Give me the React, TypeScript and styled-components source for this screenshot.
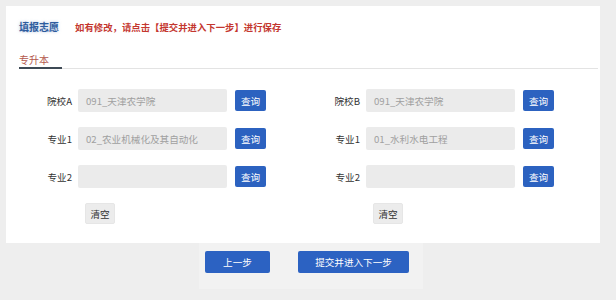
import React from "react";
import styled, { createGlobalStyle } from "styled-components";

const GlobalStyle = createGlobalStyle`
  html, body { margin: 0; padding: 0; }
  body {
    background: #eeeeee;
    font-family: "Noto Sans CJK SC", "Noto Sans", "Liberation Sans", sans-serif;
    color: #333;
  }
`;

const Page = styled.div`
  width: 616px;
  height: 300px;
  padding: 6px 0 0 6px;
  box-sizing: border-box;
  display: flex;
  flex-direction: column;
`;

const Panel = styled.div`
  width: 594px;
  height: 237px;
  box-sizing: border-box;
  background: #ffffff;
  padding: 15px 2px 0 13px;
  display: flex;
  flex-direction: column;
`;

const Header = styled.div`
  display: flex;
  align-items: center;
  gap: 16px;
  height: 12px;
`;

const Title = styled.span`
  font-size: 10px;
  line-height: 12px;
  font-weight: 700;
  color: #2e5c9e;
  text-shadow: 0 0 3px rgba(120, 150, 200, 0.6);
`;

const Notice = styled.span`
  font-size: 9.4px;
  line-height: 12px;
  font-weight: 700;
  color: #c4372f;
`;

const TabBar = styled.div`
  margin-top: 21px;
  display: flex;
  border-bottom: 1px solid #e3e3e3;
`;

const Tab = styled.div`
  width: 43px;
  font-size: 10px;
  line-height: 12px;
  color: #b4574c;
  padding-bottom: 1px;
  border-bottom: 2px solid #3e4a55;
  margin-bottom: -1px;
`;

const Form = styled.div`
  margin-top: 20px;
  margin-left: 1px;
  display: grid;
  grid-template-columns: 288px 288px;
`;

const Column = styled.div`
  display: flex;
  flex-direction: column;
  gap: 15px;
`;

const Row = styled.div`
  display: flex;
  align-items: center;
  height: 23px;
`;

const Label = styled.span`
  width: 52px;
  text-align: right;
  font-size: 9.6px;
  color: #333;
  margin-right: 6px;
`;

const Field = styled.div`
  width: 149px;
  height: 23px;
  box-sizing: border-box;
  background: #ebebeb;
  border-radius: 2px;
  padding-left: 8px;
  display: flex;
  align-items: center;
  font-size: 9.6px;
  color: #a0a0a0;
  margin-right: 8px;
`;

const QueryButton = styled.button`
  width: 31px;
  height: 21px;
  padding: 0;
  border: none;
  border-radius: 2px;
  background: #2c62c0;
  color: #fff;
  font-family: inherit;
  font-size: 9.6px;
  cursor: pointer;
`;

const ClearButton = styled.button`
  align-self: flex-start;
  margin-left: 65px;
  width: 30px;
  height: 21px;
  padding: 0;
  border: 1px solid #e6e6e6;
  border-radius: 2px;
  background: #ececec;
  color: #333;
  font-family: inherit;
  font-size: 9.6px;
`;

const Footer = styled.div`
  align-self: center;
  padding: 8px 14px 16px 6px;
  background: #f2f2f2;
  display: flex;
  gap: 28px;
`;

const StepButton = styled.button<{ $w: number }>`
  width: ${(p) => p.$w}px;
  height: 22px;
  padding: 0;
  border: none;
  border-radius: 2px;
  background: #2c62c2;
  color: #fff;
  font-family: inherit;
  font-size: 9.6px;
`;

type RowData = { label: string; value: string };

const columns: RowData[][] = [
  [
    { label: "院校A", value: "091_天津农学院" },
    { label: "专业1", value: "02_农业机械化及其自动化" },
    { label: "专业2", value: "" },
  ],
  [
    { label: "院校B", value: "091_天津农学院" },
    { label: "专业1", value: "01_水利水电工程" },
    { label: "专业2", value: "" },
  ],
];

export default function App() {
  return (
    <>
      <GlobalStyle />
      <Page>
        <Panel>
          <Header>
            <Title>填报志愿</Title>
            <Notice>如有修改，请点击【提交并进入下一步】进行保存</Notice>
          </Header>
          <TabBar>
            <Tab>专升本</Tab>
          </TabBar>
          <Form>
            {columns.map((col, ci) => (
              <Column key={ci}>
                {col.map((r, ri) => (
                  <Row key={ri}>
                    <Label>{r.label}</Label>
                    <Field>{r.value}</Field>
                    <QueryButton>查询</QueryButton>
                  </Row>
                ))}
                <ClearButton>清空</ClearButton>
              </Column>
            ))}
          </Form>
        </Panel>
        <Footer>
          <StepButton $w={65}>上一步</StepButton>
          <StepButton $w={111}>提交并进入下一步</StepButton>
        </Footer>
      </Page>
    </>
  );
}
